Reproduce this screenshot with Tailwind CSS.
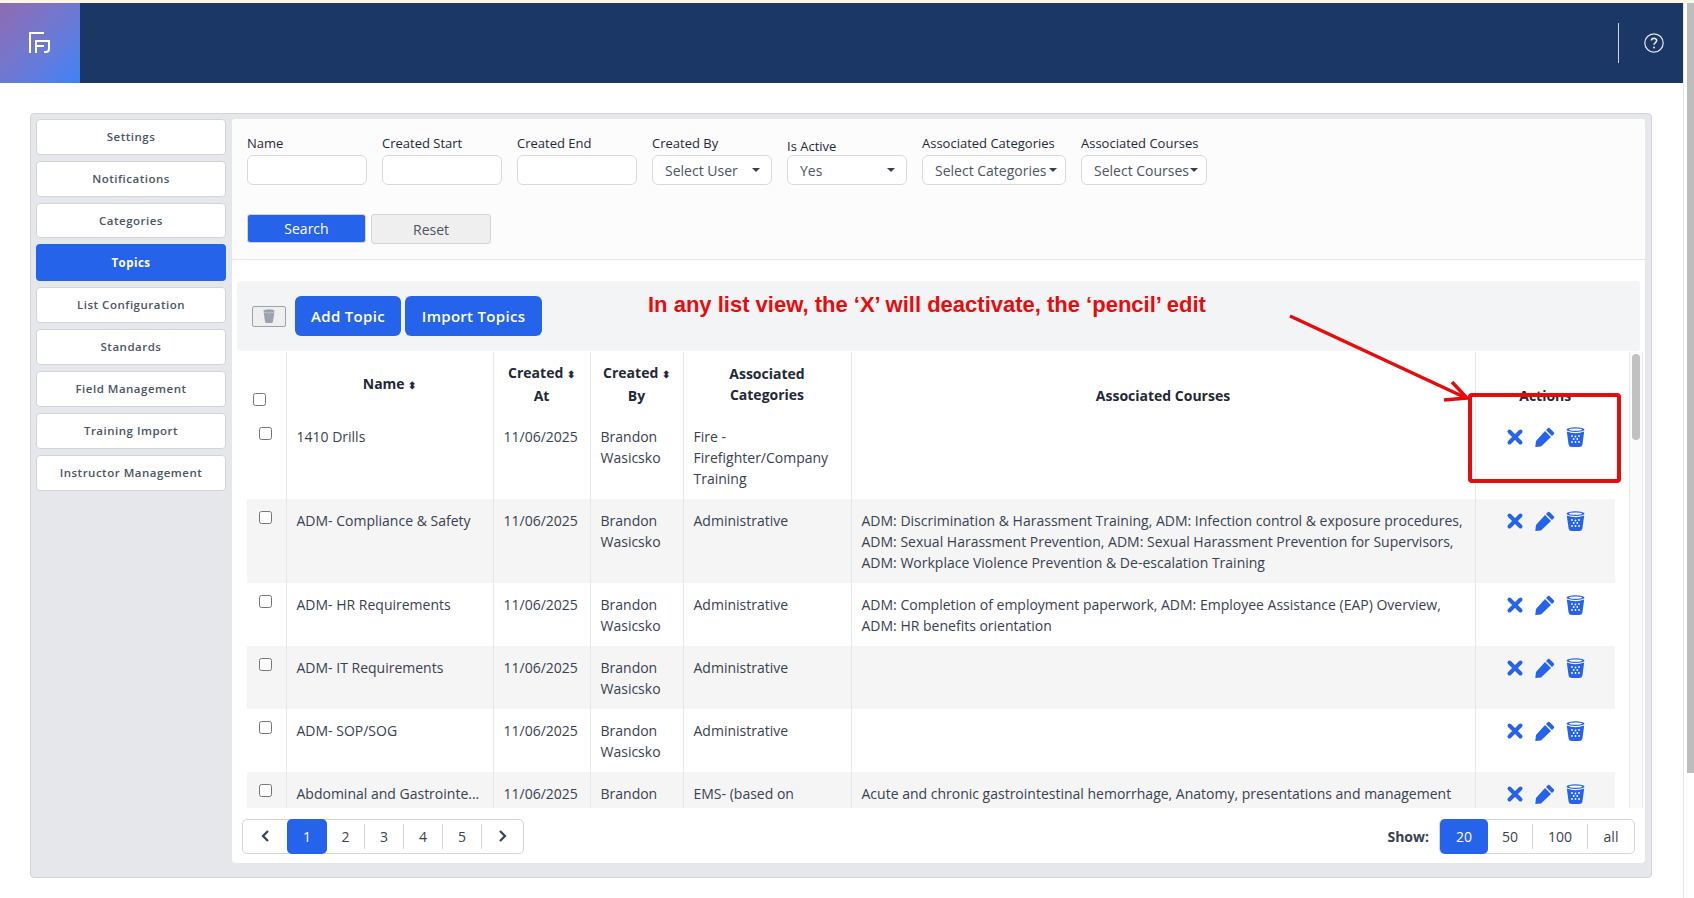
<!DOCTYPE html>
<html lang="en">
<head>
    <meta charset="UTF-8">
    <meta name="viewport" content="width=device-width, initial-scale=1.0">
    <title>Topics</title>
    <script src="https://cdn.jsdelivr.net/npm/@tailwindcss/browser@4"></script>
</head>
<body class="bg-white h-[898px] overflow-hidden flex flex-col font-['Open_Sans',sans-serif] text-[14px] text-[#374151] relative">
    <div class="h-[3px] bg-[#fdf6e3] shrink-0"></div>
    <div class="flex flex-1 min-h-0">
        <div class="w-[1683px] shrink-0 flex flex-col">
            <!-- Header -->
            <header class="h-[80px] bg-[#1a3766] flex items-center shrink-0">
                <div class="w-[80px] h-[80px] bg-gradient-to-br from-[#8f6bb0] to-[#3b82f6] flex items-center justify-center">
                    <svg width="22" height="22" viewBox="0 0 22 22" fill="none" stroke="white" stroke-width="2"><path d="M1 21V1H15"/><path d="M7 21V9H20V17Q20 20 17 20H15M7 14H15"/></svg>
                </div>
                <div class="flex-1"></div>
                <div class="w-px h-[40px] bg-white/80"></div>
                <div class="w-[64px] flex justify-center pl-[5px]">
                    <svg width="20" height="20" viewBox="0 0 20 20" fill="none" stroke="#e5e7eb" stroke-width="1.2"><circle cx="10" cy="10" r="9.2"/><path d="M7.4 7.6C7.4 4.6 12.7 4.6 12.7 7.6C12.7 9.6 10 9.5 10 11.8" stroke-width="1.6"/><circle cx="10" cy="14.4" r="1" fill="#e5e7eb" stroke="none"/></svg>
                </div>
            </header>

            <!-- Outer panel -->
            <div class="mt-[30px] ml-[30px] w-[1622px] h-[765px] bg-[#e5e7eb] border border-[#d1d5db] rounded-[4px] flex gap-[5px] pl-[5px] pr-[5px] pt-[5px] pb-[14px]">
                <!-- Sidebar -->
                <nav class="w-[190px] shrink-0 flex flex-col gap-[6px] text-[11.5px] font-semibold tracking-[0.5px] text-[#4b5563]">
                    <a class="h-[36px] flex items-center justify-center bg-white border border-[#d1d5db] rounded-[4px]">Settings</a>
                    <a class="h-[36px] flex items-center justify-center bg-white border border-[#d1d5db] rounded-[4px]">Notifications</a>
                    <a class="h-[35px] flex items-center justify-center bg-white border border-[#d1d5db] rounded-[4px]">Categories</a>
                    <a class="h-[37px] flex items-center justify-center bg-[#2563eb] text-white font-bold rounded-[4px]">Topics</a>
                    <a class="h-[36px] flex items-center justify-center bg-white border border-[#d1d5db] rounded-[4px]">List Configuration</a>
                    <a class="h-[36px] flex items-center justify-center bg-white border border-[#d1d5db] rounded-[4px]">Standards</a>
                    <a class="h-[36px] flex items-center justify-center bg-white border border-[#d1d5db] rounded-[4px]">Field Management</a>
                    <a class="h-[36px] flex items-center justify-center bg-white border border-[#d1d5db] rounded-[4px]">Training Import</a>
                    <a class="h-[36px] flex items-center justify-center bg-white border border-[#d1d5db] rounded-[4px]">Instructor Management</a>
                </nav>

                <!-- Main -->
                <main class="w-[1414px] shrink-0 bg-white rounded-[4px] flex flex-col overflow-hidden border-l border-[#e5e7eb]">
                    <!-- Filters -->
                    <section class="h-[141px] shrink-0 bg-[#fcfcfc] border-b border-[#e5e7eb] pl-[15px] pt-[15px]">
                        <div class="flex gap-[15px] items-start text-[13px] text-[#1f2937]">
                            <label class="w-[120px] block"><span class="block h-[21px] leading-[18px]">Name</span><input class="w-full h-[30px] bg-white border border-[#d9d9d9] rounded-[6px]"></label>
                            <label class="w-[120px] block"><span class="block h-[21px] leading-[18px]">Created Start</span><input class="w-full h-[30px] bg-white border border-[#d9d9d9] rounded-[6px]"></label>
                            <label class="w-[120px] block"><span class="block h-[21px] leading-[18px]">Created End</span><input class="w-full h-[30px] bg-white border border-[#d9d9d9] rounded-[6px]"></label>
                            <div class="w-[120px]"><span class="block h-[21px] leading-[18px]">Created By</span>
                                <div class="h-[30px] bg-white border border-[#d9d9d9] rounded-[6px] flex items-center justify-between pl-[12px] pr-[11px] text-[#4b5563] text-[14px]">Select User<span class="w-0 h-0 border-x-[4px] border-x-transparent border-t-[4px] border-t-[#374151]"></span></div></div>
                            <div class="w-[120px]"><span class="block h-[21px] leading-[18px] pt-[3px]">Is Active</span>
                                <div class="h-[30px] bg-white border border-[#d9d9d9] rounded-[6px] flex items-center justify-between pl-[12px] pr-[11px] text-[#4b5563] text-[14px]">Yes<span class="w-0 h-0 border-x-[4px] border-x-transparent border-t-[4px] border-t-[#374151]"></span></div></div>
                            <div class="w-[144px]"><span class="block h-[21px] leading-[18px] whitespace-nowrap">Associated Categories</span>
                                <div class="h-[30px] bg-white border border-[#d9d9d9] rounded-[6px] flex items-center justify-between pl-[12px] pr-[8px] text-[#4b5563] text-[14px]">Select Categories<span class="w-0 h-0 border-x-[4px] border-x-transparent border-t-[4px] border-t-[#374151]"></span></div></div>
                            <div class="w-[126px]"><span class="block h-[21px] leading-[18px] whitespace-nowrap">Associated Courses</span>
                                <div class="h-[30px] bg-white border border-[#d9d9d9] rounded-[6px] flex items-center justify-between pl-[12px] pr-[8px] text-[#4b5563] text-[14px]">Select Courses<span class="w-0 h-0 border-x-[4px] border-x-transparent border-t-[4px] border-t-[#374151]"></span></div></div>
                        </div>
                        <div class="flex gap-[5px] mt-[29px] text-[14px]">
                            <button class="w-[119px] h-[29px] bg-[#2563eb] text-white rounded-[3px] border border-[#d1d5db]">Search</button>
                            <button class="w-[120px] h-[30px] bg-[#efefef] text-[#4b5563] rounded-[3px] border border-[#d1d5db]">Reset</button>
                        </div>
                    </section>

                    <!-- Toolbar -->
                    <div class="mt-[21px] mx-[5px] h-[70px] shrink-0 bg-[#f3f4f6] rounded-[4px] flex items-center pl-[15px]">
                        <button class="w-[34px] h-[21px] border border-[#9ca3af] bg-[#efefef] rounded-[2px] flex items-center justify-center mr-[9px]">
                            <svg width="12" height="14" viewBox="0 0 12 14"><ellipse cx="6" cy="2" rx="5.6" ry="1.8" fill="#9ca3af"/><path d="M0.6 3L2 12.5Q2.2 14 4 14H8Q9.8 14 10 12.5L11.4 3Q6 5.4 0.6 3Z" fill="#9ca3af"/></svg>
                        </button>
                        <button class="w-[106px] h-[40px] bg-[#2563eb] text-white rounded-[6px] text-[15px] font-semibold tracking-[0.3px] mr-[4px]">Add Topic</button>
                        <button class="w-[137px] h-[40px] bg-[#2563eb] text-white rounded-[6px] text-[15px] font-semibold tracking-[0.3px]">Import Topics</button>
                    </div>

                    <!-- Table -->
                    <div class="flex-1 min-h-0 flex pl-[15px] pt-px">
                        <div class="w-[1368px] overflow-hidden">
                            <table class="w-[1368px] table-fixed border-collapse text-[14px]">
                                <colgroup><col class="w-[39px]"><col class="w-[207px]"><col class="w-[97px]"><col class="w-[93px]"><col class="w-[168px]"><col class="w-[624px]"><col class="w-[140px]"></colgroup>
                                <thead>
                                    <tr class="h-[63px] bg-white text-[#1f2937] font-bold shadow-[0_4px_12px_rgba(0,0,0,0.12)]">
                                        <th class="align-bottom pb-[9px] pl-[6px]"><input type="checkbox" class="w-[13px] h-[13px] block"></th>
                                        <th class="border-l border-[#e5e7eb] align-middle">Name <span class="text-[10px]">⬍</span></th>
                                        <th class="border-l border-[#e5e7eb] leading-[21px]">Created <span class="text-[10px]">⬍</span><br>At</th>
                                        <th class="border-l border-[#e5e7eb] leading-[21px]">Created <span class="text-[10px]">⬍</span><br>By</th>
                                        <th class="border-l border-[#e5e7eb] leading-[21px]">Associated<br>Categories</th>
                                        <th class="border-l border-[#e5e7eb] align-bottom pb-[9px]">Associated Courses</th>
                                        <th class="border-l border-[#e5e7eb] align-bottom pb-[9px]">Actions</th>
                                    </tr>
                                </thead>
                                <tbody id="rows" class="align-top leading-[21px]"></tbody>
                            </table>
                        </div>
                        <div class="w-[14px] ml-[14px] border-x border-[#e5e7eb] bg-[#fafafa] flex justify-center pt-[2px]">
                            <div class="w-[8px] h-[86px] bg-[#c1c1c1] rounded-full"></div>
                        </div>
                    </div>

                    <!-- Pagination -->
                    <div class="h-[55px] shrink-0 flex items-center justify-between pl-[10px] pr-[10px] border-t border-transparent">
                        <div class="h-[35px] w-[282px] flex items-center border border-[#d1d5db] rounded-[5px] text-[14px] text-[#374151]">
                            <span class="w-[44px] flex justify-center"><svg width="10" height="14" viewBox="0 0 10 14" fill="none" stroke="#374151" stroke-width="2.2"><path d="M8 2L3 7L8 12"/></svg></span>
                            <span class="w-[40px] h-[35px] bg-[#2563eb] text-white rounded-[5px] flex items-center justify-center">1</span>
                            <span class="w-[38px] h-[25px] flex items-center justify-center border-r border-[#d1d5db]">2</span>
                            <span class="w-[39px] h-[25px] flex items-center justify-center border-r border-[#d1d5db]">3</span>
                            <span class="w-[39px] h-[25px] flex items-center justify-center border-r border-[#d1d5db]">4</span>
                            <span class="w-[39px] h-[25px] flex items-center justify-center border-r border-[#d1d5db]">5</span>
                            <span class="w-[41px] flex justify-center"><svg width="10" height="14" viewBox="0 0 10 14" fill="none" stroke="#374151" stroke-width="2.2"><path d="M2 2L7 7L2 12"/></svg></span>
                        </div>
                        <div class="flex items-center">
                            <span class="font-bold text-[#374151] mr-[10px]">Show:</span>
                            <div class="h-[35px] w-[196px] flex items-center border border-[#d1d5db] rounded-[5px]">
                                <span class="w-[48px] h-[35px] bg-[#2563eb] text-white rounded-[5px] flex items-center justify-center">20</span>
                                <span class="w-[45px] h-[25px] flex items-center justify-center border-r border-[#d1d5db]">50</span>
                                <span class="w-[55px] h-[25px] flex items-center justify-center border-r border-[#d1d5db]">100</span>
                                <span class="w-[46px] h-[25px] flex items-center justify-center">all</span>
                            </div>
                        </div>
                    </div>
                </main>
            </div>
        </div>
        <!-- Browser scrollbar -->
        <div class="flex-1 border-l border-[#e5e7eb] flex justify-end">
            <div class="w-[7px] h-[770px] bg-[#bdbdbd]"></div>
        </div>
    </div>

    <!-- Annotation over the screenshot -->
    <div class="absolute left-[648px] top-[291px] font-['Liberation_Sans',sans-serif] font-bold text-[22px] leading-[28px] text-[#e80b0b] whitespace-nowrap">In any list view, the ‘X’ will deactivate, the ‘pencil’ edit</div>
    <svg class="absolute left-[1280px] top-[305px]" width="200" height="110" viewBox="0 0 200 110" fill="none" stroke="#e80b0b" stroke-width="3.5"><path d="M10 11L184 92"/><path d="M172 77L187 93L164 95"/></svg>
    <div class="absolute left-[1468px] top-[393px] w-[153px] h-[90px] border-[4px] border-[#e80b0b] rounded-[4px]"></div>

    <script>
        // table rows from the list view
        const topics = [
            ['1410 Drills', 'Fire - Firefighter/Company Training', ''],
            ['ADM- Compliance &amp; Safety', 'Administrative', 'ADM: Discrimination &amp; Harassment Training, ADM: Infection control &amp; exposure procedures, ADM: Sexual Harassment Prevention, ADM: Sexual Harassment Prevention for Supervisors, ADM: Workplace Violence Prevention &amp; De-escalation Training'],
            ['ADM- HR Requirements', 'Administrative', 'ADM: Completion of employment paperwork, ADM: Employee Assistance (EAP) Overview, ADM: HR benefits orientation'],
            ['ADM- IT Requirements', 'Administrative', ''],
            ['ADM- SOP/SOG', 'Administrative', ''],
            ['Abdominal and Gastrointe...', 'EMS- (based on National Registry)', 'Acute and chronic gastrointestinal hemorrhage, Anatomy, presentations and management']
        ];
        const actions = `
            <div class="flex items-center justify-center gap-[11px] pt-[1px] pl-[1px]">
                <svg width="18" height="18" viewBox="0 0 18 18" fill="none" stroke="#2563eb" stroke-width="4" stroke-linecap="round"><path d="M3.5 3.5L14.5 14.5M14.5 3.5L3.5 14.5"/></svg>
                <svg width="20" height="20" viewBox="0 0 20 20" fill="#2563eb"><path d="M14.5 1L19 5.5Q19.6 6.2 19 7L17 9L11 3L13 1Q13.8 0.4 14.5 1ZM10 4L16 10L6 19.5L0.3 20L1 14Z"/></svg>
                <svg width="19" height="20" viewBox="0 0 19 20"><ellipse cx="9.5" cy="2.6" rx="9" ry="2.4" fill="#2563eb"/><ellipse cx="9.5" cy="2.6" rx="6.6" ry="1.1" fill="#fff"/><path d="M0.8 4.6L2.6 17.5Q3 20 6 20H13Q16 20 16.4 17.5L18.2 4.6Q9.5 8 0.8 4.6Z" fill="#2563eb"/><g fill="#fff"><circle cx="6" cy="9" r=".9"/><circle cx="9.5" cy="9.5" r=".9"/><circle cx="13" cy="9" r=".9"/><circle cx="7.7" cy="12" r=".9"/><circle cx="11.3" cy="12" r=".9"/><circle cx="6" cy="15" r=".9"/><circle cx="9.5" cy="15" r=".9"/><circle cx="13" cy="15" r=".9"/></g></svg>
            </div>`;
        document.getElementById('rows').innerHTML = topics.map((t, i) => `
            <tr class="${i % 2 ? 'bg-[#f5f5f5]' : 'bg-white'}">
                <td class="pl-[12px] pt-[12px]"><input type="checkbox" class="w-[13px] h-[13px] block"></td>
                <td class="border-l border-[#e5e7eb] px-[10px] py-[10.5px]">${t[0]}</td>
                <td class="border-l border-[#e5e7eb] px-[10px] py-[10.5px] whitespace-nowrap">11/06/2025</td>
                <td class="border-l border-[#e5e7eb] px-[10px] py-[10.5px]">Brandon Wasicsko</td>
                <td class="border-l border-[#e5e7eb] px-[10px] py-[10.5px]">${t[1]}</td>
                <td class="border-l border-[#e5e7eb] px-[10px] py-[10.5px]">${t[2]}</td>
                <td class="border-l border-[#e5e7eb] py-[10.5px]">${actions}</td>
            </tr>`).join('');
    </script>
</body>
</html>
